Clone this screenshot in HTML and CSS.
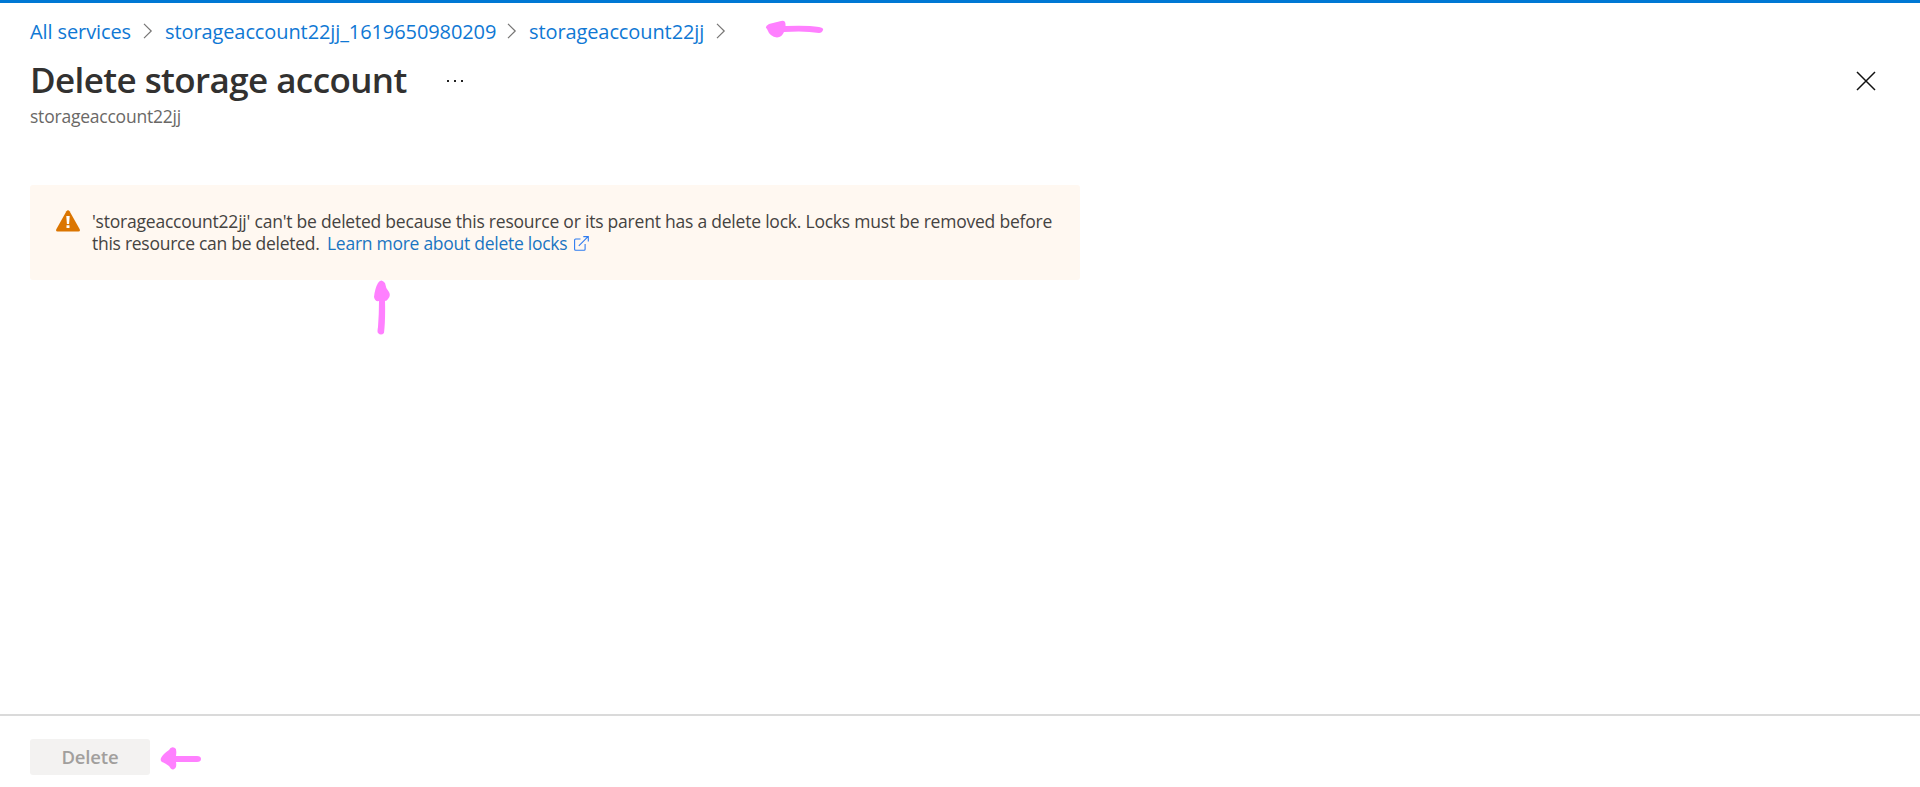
FILE: index.html
```
<!DOCTYPE html>
<html lang="en">
<head>
<meta charset="utf-8">
<title>Delete storage account</title>
<link rel="stylesheet" href="styles.css">
</head>
<body>
<div class="blade">
  <header class="header">
    <nav class="breadcrumb">
      <a class="crumb crumb-root">All services</a>
      <svg class="chevron" viewBox="0 0 10 16"><path d="M1 .8 8.2 8 1 15.2"/></svg>
      <a class="crumb crumb-group">storageaccount22jj_1619650980209</a>
      <svg class="chevron" viewBox="0 0 10 16"><path d="M1 .8 8.2 8 1 15.2"/></svg>
      <a class="crumb crumb-account">storageaccount22jj</a>
      <svg class="chevron" viewBox="0 0 10 16"><path d="M1 .8 8.2 8 1 15.2"/></svg>
    </nav>
    <div class="title-row">
      <h1 class="title">Delete storage account</h1>
      <svg class="more" viewBox="0 0 18 4"><path d="M1 1h2v2H1zM8 1h2v2H8zM15 1h2v2h-2z"/></svg>
      <svg class="close" viewBox="0 0 20 20"><path d="M1 1 19 19M19 1 1 19"/></svg>
    </div>
    <p class="subtitle">storageaccount22jj</p>
  </header>
  <main class="content">
    <section class="notice">
      <svg class="warning" viewBox="0 0 24 22">
        <path class="warning-shape" d="M10.4 1.2Q12-.9 13.6 1.2L23.7 19.3Q24.5 21.5 22.5 21.5H1.5Q-.5 21.5.3 19.3Z"/>
        <path class="warning-mark" d="M10.3 6h3.400L13.100 14h-2.200zM10.500 15.200h3v2.900h-3z"/>
      </svg>
      <p class="message"><span class="line line-first">'storageaccount22jj' can't be deleted because this resource or its parent has a delete lock. Locks must be removed before</span>
        <span class="line line-second"><span class="line-text">this resource can be deleted.</span><a class="learn">Learn more about delete locks</a><svg class="external" viewBox="0 0 15 15"><path d="M6.5 3H1.6Q.6 3 .6 4v9.3q0 1 1 1h8.500q1 0 1-1V8M4.8 9.8 14 .7M9.3.6h5V5.5"/></svg></span></p>
    </section>
  </main>
  <footer class="footer">
    <button class="delete" disabled><span>Delete</span></button>
  </footer>
  <svg class="mark mark-crumb" viewBox="0 0 60 20"><path d="M2 9Q-1 7 4 4L16 1Q21-.5 20.500 6Q42 5 54 7Q59 8 58 10Q57 13 54 13Q40 10.500 19 12Q17 17 12 17.500Q5 17 2 9Z"/></svg>
  <svg class="mark mark-notice" viewBox="0 0 18 56"><path d="M5 3Q8-2 12 3Q12.500 8 16 12Q18 16 15 19Q14 21 12 21Q12.500 40 11 53Q8 56 5 53Q4 52 5 47Q6 33 6 21Q2 22 1 17Q2 8 5 3Z"/></svg>
  <svg class="mark mark-delete" viewBox="0 0 42 24"><path d="M1 12Q3 8 9 4Q11 0 15 2Q17 3 16 10L37 10Q41 10 41 13Q41 16 37 16L16 16Q17 22 14 23Q12 25 9 20Q5 17 2 16Q0 15 1 12Z"/></svg>
</div>
</body>
</html>
```
FILE: styles.css
```
* { box-sizing: border-box; margin: 0; padding: 0; }
body { background: #fff; font-family: "Open Sans", "Noto Sans", sans-serif; color: #323130; }
.blade { position: relative; height: 787px; display: flex; flex-direction: column; border-top: 3px solid #0078d4; overflow: hidden; }
.header { padding: 15px 30px 0; }
.breadcrumb { display: flex; align-items: center; height: 28px; }
.crumb { font-size: 20px; line-height: 28px; color: #0f78d4; white-space: nowrap; letter-spacing: -0.1px; }
.crumb-root { width: 101px; }
.crumb-group { width: 330px; }
.crumb-account { width: 175px; }
.chevron { width: 10px; height: 16px; flex: none; margin: 0 12px 3px 12px; fill: none; stroke: #767574; stroke-width: 1.2; }
.title-row { display: flex; align-items: center; height: 56px; margin-top: 7px; }
.title { width: 414px; font-size: 35px; font-weight: 600; line-height: 54px; height: 56px; letter-spacing: -0.6px; white-space: nowrap; }
.more { width: 18px; height: 4px; margin-left: 2px; fill: #222; }
.close { width: 20px; height: 20px; margin-left: auto; margin-right: 14px; fill: none; stroke: #111; stroke-width: 1.5; }
.subtitle { font-size: 17.500px; line-height: 24px; margin-top: -5px; letter-spacing: -0.22px; color: #6a6866; }
.content { flex: 1; padding: 0 30px; }
.notice { display: flex; width: 1050px; height: 95px; margin-top: 57px; padding: 25px 26px; background: #fff8f1; border-radius: 3px; }
.warning { width: 24px; height: 22px; flex: none; margin-right: 12px; }
.warning-shape { fill: #db7500; }
.warning-mark { fill: #fff; }
.message { font-size: 17.500px; line-height: 22px; white-space: nowrap; color: #454341; }
.line { display: flex; align-items: center; height: 22px; letter-spacing: -0.22px; }
.line-second { letter-spacing: -0.27px; }
.line-text { width: 235px; }
.learn { width: 247px; color: #1a75c2; }
.external { width: 15px; height: 15px; fill: none; stroke: #2f7cf0; stroke-width: 1.1; }
.footer { height: 73px; padding: 23px 30px 0; border-top: 2px solid #dadada; }
.delete { display: block; width: 120px; height: 36px; border: 0; border-radius: 3px; background: #f3f2f1; color: #a19f9d; font: 600 18.500px/36px "Open Sans", "Noto Sans", sans-serif; letter-spacing: -0.15px; }
.mark { position: absolute; fill: #ff80ff; }
.mark-crumb { left: 765px; top: 17px; width: 60px; height: 20px; }
.mark-notice { left: 373px; top: 277px; width: 18px; height: 56px; }
.mark-delete { left: 160px; top: 743px; width: 42px; height: 24px; }
```
